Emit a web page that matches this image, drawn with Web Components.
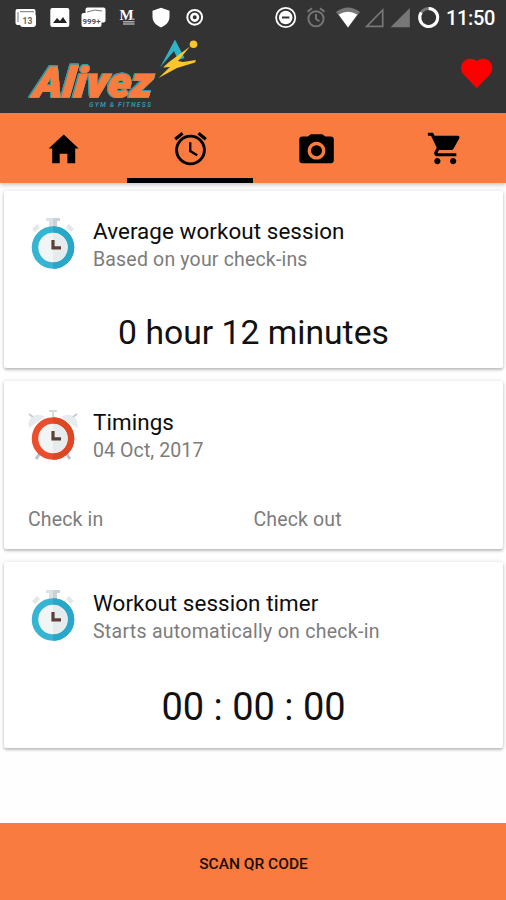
<!DOCTYPE html>
<html lang="en">
<head>
<meta charset="utf-8">
<title>Alivez Gym &amp; Fitness</title>
<style>
html,body{margin:0;height:100%;background:#fefefe;font-family:Roboto,"Liberation Sans",sans-serif;overflow:hidden}
</style>
</head>
<body>
<gym-app></gym-app>
<script>
const define = (name, html) => {
  const t = document.createElement('template');
  t.innerHTML = html;
  customElements.define(name, class extends HTMLElement {
    constructor() {
      super();
      this.attachShadow({mode: 'open'}).appendChild(t.content.cloneNode(true));
    }
  });
};

define('status-bar', `
<style>
:host{display:block;height:34px;color:#fff}
.row{display:flex;height:34px;justify-content:space-between}
svg{display:block;flex:none}
.time{font-size:20px;font-weight:500;line-height:36px;padding:0 11px 0 5px;letter-spacing:-.35px}
.right{display:flex}
text{font-family:Roboto,sans-serif;font-weight:700}
</style>
<div class="row">
<svg width="220" height="34" viewBox="0 0 220 34">
  <rect x="15.5" y="9" width="20" height="16" rx="2" fill="#fff"/>
  <path d="M18 12v10M20 11.700h14" stroke="#777" stroke-width="1"/>
  <rect x="20" y="14" width="16" height="13" rx="3" fill="#fff"/>
  <text x="22.5" y="24" font-size="8.5" fill="#666">13</text>
  <rect x="50.3" y="8" width="19" height="19" rx="2" fill="#fff"/>
  <path d="M53 23l4-5 3 3 3-4 4 6z" fill="#222"/>
  <rect x="85.5" y="7.5" width="20" height="15" rx="2" fill="#fff"/>
  <path d="M87 12l8-2 7 1" stroke="#777" fill="none"/>
  <rect x="81.5" y="13" width="20" height="14" rx="2" fill="#fff"/>
  <text x="82.5" y="23.500" font-size="8" fill="#555" textLength="18">999+</text>
  <text x="119.5" y="20" font-size="15" fill="#fff" style="font-family:'Liberation Serif',serif" textLength="13">M</text>
  <path d="M123 21.700h11.500M123 24h11.500M131 19.300h3.500" stroke="#aaa" stroke-width="1.600"/>
  <path d="M161 7.800l8.500 3v6c0 5-3.500 8.500-8.500 10.700-5-2.200-8.500-5.700-8.500-10.700v-6z" fill="#fff"/>
  <circle cx="194.700" cy="17.300" r="7.400" fill="none" stroke="#fff" stroke-width="2"/>
  <circle cx="194.700" cy="17.300" r="3.300" fill="none" stroke="#fff" stroke-width="2.600"/>
</svg>
<div class="right">
<svg width="171" height="34" viewBox="270 0 171 34" fill="none">
  <circle cx="285.700" cy="17.500" r="9.600" stroke="#fff" stroke-width="1.800"/>
  <circle cx="285.700" cy="17.500" r="6.800" fill="#fff"/>
  <path d="M282 17.500h7.400" stroke="#333" stroke-width="2"/>
  <g stroke="#777" stroke-width="1.900"><circle cx="316" cy="18.800" r="7.600"/><path d="M316 14v5l3.500 2.300M307.500 11.800l4.500-3.600M324.500 11.800l-4.500-3.600"/></g>
  <path d="M336 12q12-9 24 0L348 27.500z" fill="#777"/>
  <path d="M338.700 14.500q9.300-5.500 18.600 0L348 27.500z" fill="#fff"/>
  <path d="M382.700 10v16.300h-16z" stroke="#777" stroke-width="1.700"/>
  <path d="M409.800 8v19.300h-19.300z" fill="#777"/>
  <circle cx="428.700" cy="17.500" r="9" stroke="#777" stroke-width="3"/>
  <path d="M428.700 8.500a9 9 0 1 1-7.500 4" stroke="#fff" stroke-width="3"/>
</svg>
<div class="time">11:50</div>
</div>
</div>`);

define('app-bar', `
<style>
:host{display:flex;justify-content:space-between;height:79px}
svg{display:block}
text{font-family:Roboto,sans-serif;font-style:italic}
.mark{filter:drop-shadow(.8px 0 0 #2c9ba6) drop-shadow(-.8px 0 0 #2c9ba6) drop-shadow(0 .6px 0 #2c9ba6) drop-shadow(0 -.6px 0 #2c9ba6)}
</style>
<svg width="220" height="79" viewBox="0 34 220 79">
  <g class="mark"><g transform="translate(33 97) skewX(-6)">
  <text x="0" y="0" font-size="42" font-weight="900" fill="#f97b3d" stroke="#f97b3d" stroke-width="1.400" textLength="119" lengthAdjust="spacingAndGlyphs">Alivez</text></g></g>
  <text x="89" y="107.200" font-size="6.800" font-weight="700" fill="#2f93ad" textLength="62">GYM &amp; FITNESS</text>
  <path d="M160 67.500L175 39.500 184.500 58 178 60 174 51z" fill="#2fb3c6"/>
  <path d="M190 46.500l-21 15.500-6 5.500 7-.5L158.500 78l18.500-10 18-5.500 1-2.500-13 2-5-1z" fill="#fbc52c"/>
  <circle cx="193.500" cy="44.300" r="3.800" fill="#fbc52c"/>
</svg>
<svg width="60" height="79" viewBox="446 34 60 79"><path d="M476.700 88.300L463.500 74.500C456 64 468 54 476.700 61 485.500 54 497.500 64 490 74.500Z" fill="#f00"/></svg>`);

define('nav-tab', `
<style>
:host{flex:1;height:70px;display:flex;justify-content:center;box-sizing:border-box;border-bottom:5px solid transparent}
:host([active]){border-bottom-color:#000}
</style><slot></slot>`);

define('tab-bar', `
<style>
:host{display:flex;height:70px;background:#f97b3f;box-shadow:0 2px 4px rgba(0,0,0,.22)}
svg{display:block;width:60px;height:65px}
</style>
<nav-tab><svg viewBox="33.3 112.500 60 65"><path d="M64 134l15 14h-3.500v14.700H67.700v-9.500H60v9.500h-7.500V148H49z"/></svg></nav-tab>
<nav-tab active><svg viewBox="159.800 112.700 60 65" fill="none" stroke="#000"><circle cx="190.300" cy="149.700" r="13.900" stroke-width="2.900"/><path d="M190 142v8.800l7 4.200" stroke-width="2.400"/><path d="M175 139l7.300-6M205.600 139l-7.300-6" stroke-width="3.200"/></svg></nav-tab>
<nav-tab><svg viewBox="286.200 112.500 60 65"><path fill-rule="evenodd" d="M311 133.700h11.500l3 2.300H331a3 3 0 0 1 3 3v20.700a3 3 0 0 1-3 3h-28.500a3 3 0 0 1-3-3V139a3 3 0 0 1 3-3h5.500zM316.700 141.300a8.900 8.900 0 1 0 .01 0z"/><circle cx="316.700" cy="150.200" r="5.500"/></svg></nav-tab>
<nav-tab><svg viewBox="412.700 112.700 60 65"><path transform="translate(426 129.200) scale(1.58)" d="M7 18c-1.100 0-1.990.9-1.990 2S5.900 22 7 22s2-.9 2-2-.9-2-2-2zM1 2v2h2l3.600 7.590-1.350 2.450c-.16.280-.25.610-.25.960 0 1.100.9 2 2 2h12v-2H7.420c-.14 0-.25-.11-.25-.25l.03-.12.900-1.630h7.450c.75 0 1.410-.41 1.750-1.030l3.580-6.490A1.003 1.003 0 0 0 20 4H5.210l-.94-2H1zm16 16c-1.100 0-1.990.9-1.990 2s.89 2 1.990 2 2-.9 2-2-.9-2-2-2z"/></svg></nav-tab>`);

const face = (ring, dark) => `
  <g transform="translate(0 2.500)"><circle cx="25" cy="29" r="18" fill="#f2f5f6" stroke="${ring}" stroke-width="6.500"/>
  <path d="M25 7.700a21.300 21.300 0 0 1 0 42.600v-6.500a14.800 14.800 0 0 0 0-29.600z" fill="${dark}"/>
  <path d="M25 14.200a14.800 14.800 0 0 1 0 29.600z" fill="#e6ecee"/>
  <path d="M25 21.500v7.800h8" fill="none" stroke="#5b4038" stroke-width="3.200"/></g>`;

define('stopwatch-icon', `
<style>:host{display:block;width:50px;height:54px}svg{display:block}</style>
<svg width="50" height="54" viewBox="0 0 50 54">
  <path d="M18 2h14v3h-3v6h-8V5h-3z" fill="#dce1e5"/><path d="M25 2h7v3h-3v6h-4z" fill="#cbd2d7"/>
  <path d="M4 13l5-5 3 3-5 5zM46 13l-5-5-3 3 5 5z" fill="#e2e7ea"/>
  ${face('#35b4d3', '#28a7c8')}
</svg>`);

define('alarm-icon', `
<style>:host{display:block;width:50px;height:54px}svg{display:block}</style>
<svg width="50" height="54" viewBox="0 0 50 54">
  <path d="M12 46l-4 6M38 46l4 6" stroke="#bcc3c8" stroke-width="3"/>
  <path d="M21 4h8M25 3v7" stroke="#d5dce0" stroke-width="2"/>
  <path d="M1 21C-2 11 8 4 17 10zM49 21C52 11 42 4 33 10z" fill="#e5ebef"/>
  <path d="M1 7l4 3M49 7l-4 3" stroke="#c5cdd2" stroke-width="2"/>
  ${face('#ea4e2c', '#df4724')}
</svg>`);

define('info-card', `
<style>
:host{display:block;background:#fff;border-radius:2px;box-shadow:0 2px 3px rgba(0,0,0,.22),0 0 4px rgba(0,0,0,.12);box-sizing:border-box;padding:25px 24px 0}
.head{display:flex;gap:15px;height:57px}
.title{font-size:22.400px;line-height:30px;color:#0c0c0c;white-space:nowrap;letter-spacing:.08px}
.sub{font-size:19.500px;line-height:28px;color:#7c7c7c;white-space:nowrap}
</style>
<div class="head"><slot name="icon"></slot><div><div class="title"><slot name="title"></slot></div><div class="sub"><slot name="sub"></slot></div></div></div>
<slot></slot>`);

define('scan-button', `
<style>
:host{display:flex;height:77px;align-items:center;justify-content:center;background:#f97b3f;color:#1a0d05;font-size:15.500px;font-weight:500;padding:4px 0 0 1px;box-sizing:border-box}
</style><span><slot></slot></span>`);

define('gym-app', `
<style>
:host{display:flex;flex-direction:column;height:900px;width:506px}
header{background:#333;height:113px}
main{flex:1;display:flex;flex-direction:column;padding:8px 3px 0 4px;gap:13px}
.a{height:177px}
.b{height:168px;padding-top:26px}
.c{height:186px;padding-top:26px}
.big{text-align:center;font-size:33.700px;line-height:40px;color:#111;white-space:nowrap}
.a .big{margin-top:40px}
.c .big{margin-top:40px;font-size:38px;line-height:44px}
.checks{display:grid;grid-template-columns:1fr 1fr;margin-top:42px;font-size:19.500px;line-height:27px;color:#7c7c7c;letter-spacing:.15px}
i{font-style:normal}
.s1{letter-spacing:.18px}.s2{letter-spacing:.1px}.s3{letter-spacing:.28px}
</style>
<header><status-bar></status-bar><app-bar></app-bar></header>
<tab-bar></tab-bar>
<main>
<info-card class="a"><stopwatch-icon slot="icon"></stopwatch-icon><i slot="title">Average workout session</i><i slot="sub" class="s1">Based on your check-ins</i><div class="big">0 hour 12 minutes</div></info-card>
<info-card class="b"><alarm-icon slot="icon"></alarm-icon><i slot="title">Timings</i><i slot="sub" class="s2">04 Oct, 2017</i><div class="checks"><i>Check in</i><i>Check out</i></div></info-card>
<info-card class="c"><stopwatch-icon slot="icon"></stopwatch-icon><i slot="title">Workout session timer</i><i slot="sub" class="s3">Starts automatically on check-in</i><div class="big">00 : 00 : 00</div></info-card>
</main>
<scan-button>SCAN QR CODE</scan-button>`);
</script>
</body>
</html>
